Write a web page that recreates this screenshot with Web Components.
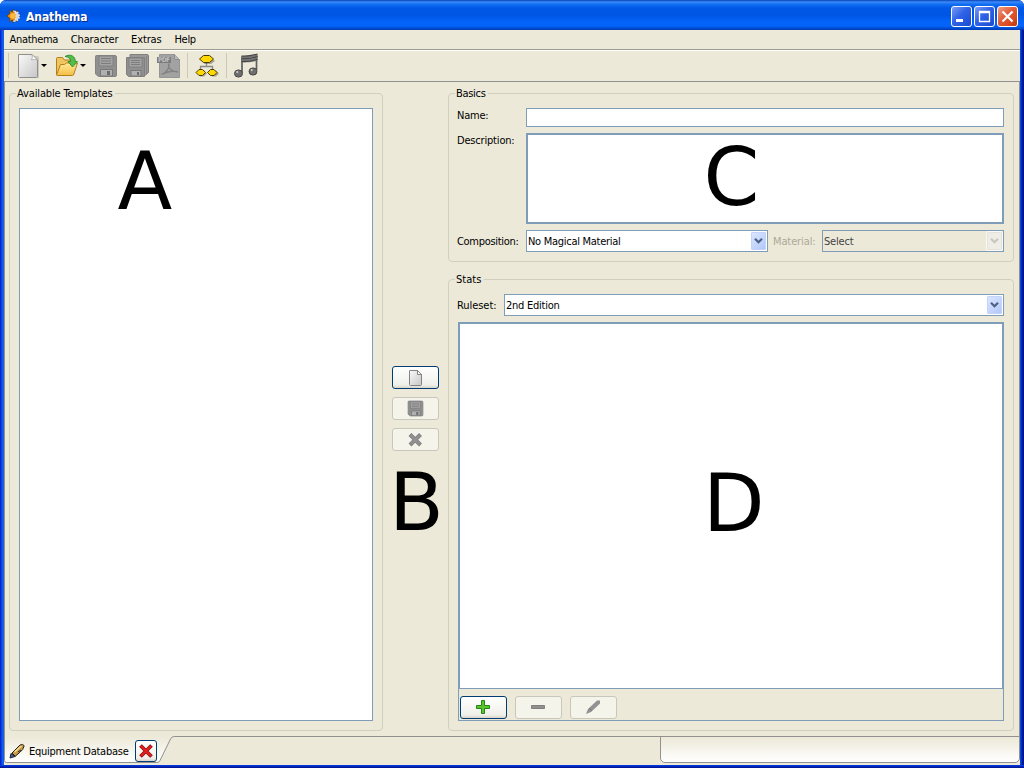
<!DOCTYPE html>
<html lang="en">
<head>
<meta charset="utf-8">
<title>Anathema</title>
<style>
html,body{margin:0;width:1024px;height:768px;overflow:hidden}
body{font:11px "DejaVu Sans Condensed","DejaVu Sans",sans-serif;font-stretch:condensed;color:#000}
</style>
</head>
<body>
<ana-window></ana-window>
<script>
const define = (name, html, init) => customElements.define(name, class extends HTMLElement {
  constructor() { super(); this.attachShadow({mode: 'open'}); }
  connectedCallback() {
    if (this.shadowRoot.firstChild) return;
    const t = document.createElement('template');
    t.innerHTML = html;
    this.shadowRoot.append(t.content.cloneNode(true));
    if (init) init.call(this, this.shadowRoot);
  }
});

/* label that spaces its letters to fill a given width */
customElements.define('ui-text', class extends HTMLElement {
  connectedCallback() {
    if (this.shadowRoot) return;
    const r = this.attachShadow({mode: 'open'});
    r.innerHTML = '<style>:host{display:flex;align-items:flex-start;height:14px;white-space:pre;line-height:14px;flex:none}span{display:block;flex:none;margin-top:1px}</style><span></span>';
    const s = r.querySelector('span');
    s.textContent = this.getAttribute('t');
    const w = +this.getAttribute('w');
    this.style.width = w + 'px';
    const real = s.getBoundingClientRect().width;
    if (real) s.style.letterSpacing = ((w - .5 - real) / s.textContent.length) + 'px';
  }
});

const icons = {
  sun: [16, `<path d="M7.500 1l1.200 3L11.500 2.500 11 5.500l3 2.500-3 2.500.5 3-2.800-1.500-1.200 3-1.200-3L3.500 13.500l.5-3L.8 8 4 5.500l-.5-3L6.300 4z" fill="#e08a10" stroke="#5c3408" stroke-width=".6"/><path d="M8.500 3.500a4.700 4.700 0 0 1 0 9.500c1.800-3 1.800-6.500 0-9.500z" fill="#d0d6e0" stroke="#e6e9ee" stroke-width="1.600" stroke-dasharray="1.500 1.200"/><circle cx="6.800" cy="8" r="2.700" fill="#ffb836"/>`],
  doc: [16, `<path d="M2.500 1q0-.5.5-.5h7.500l4 4V14.500q0 1-1 1h-10q-1 0-1-1z" fill="url(#g)" stroke="#838383"/><path d="M10.500 .5v4h4z" fill="#fff" stroke="#838383"/>`],
  page: [24, `<path d="M3.500 2h18l1.500 1v21H4z" fill="#000" opacity=".13"/><path d="M2.500 .5h13.500l5.500 5.500v16.500q0 1-1 1h-17q-1 0-1-1z" fill="url(#g)" stroke="#8e8e8e"/><path d="M16 .5q1 3-.5 5.500 3-1 6 0z" fill="#fff" stroke="#a5a5a5" stroke-width=".8"/>`],
  folder: [24, `<path d="M1.500 20.500V4.500q0-1 1-1h5l2 2.500h8q1 0 1 1v4" fill="#eec55f" stroke="#b3801d"/><path d="M1.500 21L5.500 10.500h4l2-1.500h11l-4 12q-.3.500-1 .5h-15q-1 0-1-.5z" fill="url(#y)" stroke="#b3801d"/><path d="M10 2.500c5-3 10.500-.5 10.300 5l2.200.2-5 5.300-4.500-5.500 2.700-.1c0-2.500-2-4.600-5.700-4.900z" fill="#52bd48" stroke="#2b8a28" stroke-width=".9"/>`],
  disk: [24, `<path d="M2.500 1.500h18.500q1.500 0 1.500 1.500v18q0 1.500-1.500 1.500H4.500L1.500 20V2.500q0-1 1-1z" fill="#8f8f8f" stroke="#838383"/><path d="M5 2h14v10H5z" fill="#a3a3a3" stroke="#808080"/><path d="M7 4.500h10M7 7h10M7 9.500h10" stroke="#7c7c7c"/><path d="M6.500 15.500h12V22h-12z" fill="#b0b0b0" stroke="#787878"/><path d="M13 17h3v4h-3z" fill="#6c6c6c"/>`],
  disks: [24, `<path d="M5 .5h17q1.500 0 1.500 1.500v16.500L20.500 21H5z" fill="#9a9a9a" stroke="#808080"/><path d="M21.500 2v18" stroke="#858585"/><path d="M1.500 3.500h18v19H3.500l-2-2z" fill="#8f8f8f" stroke="#808080"/><path d="M4 4h13v9H4z" fill="#a3a3a3" stroke="#808080"/><path d="M6 6.500h9M6 8.500h9M6 10.500h9" stroke="#7c7c7c"/><path d="M6 16.500h10V22H6z" fill="#b0b0b0" stroke="#787878"/><path d="M12 18h2v3h-2z" fill="#6c6c6c"/>`],
  pdf: [24, `<path d="M2.500 .5h15l5 5v18h-20z" fill="#a2a2a2" stroke="#959595"/><path d="M17.500 .5v5h5" fill="#b8b8b8" stroke="#909090"/><path d="M0 3h14v6H0z" fill="#7c7c7c"/><text x="1" y="8.300" font-size="6.500" font-weight="bold" fill="#c0c0c0" font-family="DejaVu Sans" textLength="12">PDF</text><path d="M4.500 20.500c6-2 8.500-8 7.500-10.500-1.500 1 0 7.500 9 8-4-1.500-11 0-16.500 2.500z" fill="none" stroke="#828282" stroke-width="1.300"/>`],
  tree: [24, `<path d="M11.500 9v3.500M5.500 17v-4.500h12V17" fill="none" stroke="#8b8b85" stroke-width="1.300"/><g fill="#000" opacity=".3"><path d="M9 4h7l4 3-4 3H9zM5 16.500h4l3 3-3 3H5zM17 16.500h4l3 3-3 3h-4z"/></g><g fill="#ffd800" stroke="#4a3c00"><path d="M8.500 1.500h6l4 3.500-4 3.500h-6L4.500 5z"/><path d="M4 15.500h3.500l3 3-3 3H4l-3-3zM15.500 15.500h3.500l3 3-3 3h-3.500l-3-3z"/></g>`],
  note: [26, `<path d="M9 20V3.500M23.500 17V2" stroke="#606060" stroke-width="1.700"/><path d="M8.500 3c6 .5 11-.5 16-2v6.500C19 9.500 14 9.500 8.500 9z" fill="#767676"/><path d="M8.500 3c6 .5 11-.5 16-2M8.500 5.700c6 .5 11-.5 16-2.200M8.500 8.500c6 .5 11-.5 16-2.200" fill="none" stroke="#444" stroke-width="1.100"/><ellipse cx="5.500" cy="20.500" rx="4" ry="3.600" fill="#6e6e6e" stroke="#484848"/><ellipse cx="20" cy="18.500" rx="4" ry="3.600" fill="#6e6e6e" stroke="#484848"/><path d="M3.500 19.500l1.500-1M18 17.500l1.500-1" stroke="#d5d5d5" stroke-width="1.700"/>`],
  x: [16, `<path d="M3 2.500l10.500 10.500M13.500 2.500L3 13" stroke="#7c7c7c" stroke-width="4"/><path d="M3.500 3l9.500 9.500M13 3L3.500 12.500" stroke="#919191" stroke-width="2.500"/>`],
  redx: [16, `<path d="M2.500 2.500l11 11M13.500 2.500l-11 11" stroke="#8f1010" stroke-width="3.800"/><path d="M3 3l10 10M13 3L3 13" stroke="#e02020" stroke-width="2.400"/>`],
  plus: [16, `<path d="M6.500 .5h3v5h5v3h-5v5h-3v-5h-5v-3h5z" fill="#5bc42d" stroke="#23871a"/>`],
  minus: [16, `<path d="M1.500 5.500h13v3h-13z" fill="#909090" stroke="#808080"/>`],
  pen: [16, `<path d="M1 14l2-5L12 .5h3v3L6 12z" fill="#929292"/><path d="M4 8l3 3" stroke="#777"/>`],
  quill: [16, `<path d="M1 15l1-4.500 4 3z" fill="#3c66a0" stroke="#223"/><path d="M3 10l8-8q3-1.500 4.200.8-1 4.200-4.200 6.400l-5 4.300z" fill="#c79b49" stroke="#2e2410"/><path d="M5.500 9l7-6" stroke="#f3dd9b" stroke-width="1.500"/><path d="M3 10l3 3M9 9l3-2" stroke="#222"/>`]
};
customElements.define('ui-icon', class extends HTMLElement {
  connectedCallback() {
    if (this.shadowRoot) return;
    const [n, body] = icons[this.getAttribute('n')], s = this.getAttribute('s') || n;
    this.attachShadow({mode: 'open'}).innerHTML = `<style>:host{display:block;flex:none}svg{display:block;overflow:visible}</style>
<svg width="${s}" height="${s}" viewBox="0 0 ${n} ${n}"><defs><linearGradient id="g" x2="1" y2="1"><stop stop-color="#fafafa"/><stop offset="1" stop-color="#c6c6c6"/></linearGradient><linearGradient id="y" x2="0" y2="1"><stop stop-color="#ffeb9c"/><stop offset="1" stop-color="#f5bd42"/></linearGradient></defs>${body}</svg>`;
  }
});

define('ui-button', `<style>
:host{display:flex;align-items:center;justify-content:center;box-sizing:border-box;width:47px;height:23px;padding:0 1px 1px 0;flex:none;border:1px solid #003c74;border-radius:3px;background:linear-gradient(#fff,#f0f0ea 85%,#d9d4c8)}
:host([off]){border-color:#c9c7ba;background:#f5f4ea}
::slotted(ui-icon){margin-top:1px}
</style><slot></slot>`);

define('ui-group', `<style>
:host{display:flex;flex-direction:column;box-sizing:border-box;position:relative;border:1px solid #d0d0bf;border-radius:4px}
ui-text{position:absolute;left:6px;top:-8px;padding:0 2px 0 1px;background:#ece9d8}
</style><ui-text></ui-text><slot></slot>`, function (r) {
  const old = r.querySelector('ui-text'), t = document.createElement('ui-text');
  t.setAttribute('t', this.getAttribute('label'));
  t.setAttribute('w', this.getAttribute('lw'));
  old.replaceWith(t);
});

define('ui-combo', `<style>
:host{display:flex;align-items:center;justify-content:space-between;box-sizing:border-box;height:22px;border:1px solid #7f9db9;background:#fff;padding:0 1px}
:host([off]){background:#ece9d8;color:#444}
i{display:flex;align-items:center;justify-content:center;box-sizing:border-box;width:15px;height:18px;border:1px solid #c3d3fd;border-radius:1px;background:linear-gradient(135deg,#dbe6ff,#b1c8fa);color:#4d6185}
:host([off]) i{background:#efeee6;border-color:#e5e3d9;box-shadow:0 0 0 1px #faf9f5;color:#c9c8bc}
</style><slot></slot><i><svg width="9" height="6"><path d="M1 .8l3.500 3.500L8 .8" fill="none" stroke="currentColor" stroke-width="2.200"/></svg></i>`);

define('win-button', `<style>
:host{display:flex;box-sizing:border-box;width:21px;height:21px;border:1px solid #fff;border-radius:3px;background:linear-gradient(135deg,#7a9cf5,#2f62e6 45%,#2456dc 75%,#1c48cf)}
:host([k=c]){background:linear-gradient(135deg,#f0a088,#e25a36 45%,#d94a22 75%,#b83410)}
svg{display:block}
</style><svg width="19" height="19" fill="none" stroke="#fff"><path/></svg>`, function (r) {
  const k = this.getAttribute('k'), p = r.querySelector('path');
  p.setAttribute('d', {m: 'M4 13.500h7', x: 'M4.500 4.500h10v10h-10zM4 5.500h11', c: 'M4.500 4.500l10 10M14.500 4.500l-10 10'}[k]);
  p.setAttribute('stroke-width', {m: 3, x: 1.3, c: 2.2}[k]);
});

define('ana-title', `<style>
:host{display:flex;align-items:center;box-sizing:border-box;height:30px;flex:none;padding:2px 6px 0 6px;background:linear-gradient(#0842b8 0,#3c8cf8 2px,#1470f4 4px,#0058e6 8px,#0056e4 15px,#0464fa 22px,#0464fa 26px,#0050d8 28px,#0038b0 30px);color:#fff}
b{flex:1;margin-left:4px;font:bold 12px "DejaVu Sans Condensed","DejaVu Sans",sans-serif;font-stretch:condensed;text-shadow:1px 1px #0a2a80}
div{display:flex;gap:2px}
</style><ui-icon n="sun"></ui-icon><b><ui-text t="Anathema" w="62"></ui-text></b><div><win-button k="m"></win-button><win-button k="x"></win-button><win-button k="c"></win-button></div>`);

define('ana-menu', `<style>
:host{display:flex;height:19px;flex:none;box-sizing:border-box;padding:2px 0 0 5.500px}
ui-text{margin-right:12.300px}
</style><ui-text t="Anathema" w="49"></ui-text><ui-text t="Character" w="48"></ui-text><ui-text t="Extras" w="31"></ui-text><ui-text t="Help" w="22"></ui-text>`);

define('ana-tools', `<style>
:host{display:flex;align-items:center;box-sizing:border-box;height:33px;flex:none;border-top:1px solid #9d9c92;border-bottom:1px solid #919191;box-shadow:inset 0 1px #fff;padding:0 0 0 4px}
i{width:1px;height:25px;background:#cbc9b5}
b{width:0;height:0;border:3px solid transparent;border-top-color:#000;border-bottom:0}
</style><i></i><ui-icon n="page" style="margin-left:7px"></ui-icon><b style="margin-left:1px"></b>
<ui-icon n="folder" style="margin-left:8px"></ui-icon><b style="margin-left:1px"></b>
<ui-icon n="disk" style="margin-left:8px"></ui-icon><ui-icon n="disks" style="margin-left:7px"></ui-icon><ui-icon n="pdf" style="margin-left:8px"></ui-icon>
<i style="margin-left:6px"></i><ui-icon n="tree" style="margin-left:7px"></ui-icon><i style="margin-left:7px"></i><ui-icon n="note" style="margin-left:6px"></ui-icon>`);

define('ana-templates', `<style>
:host{display:flex;width:374px;margin-top:11px}
ui-group{flex:1;padding:14px 9px 9px}
div{flex:1;border:1px solid #7f9db9;background:#fff}
</style><ui-group label="Available Templates" lw="96"><div></div></ui-group>`);

define('ana-actions', `<style>
:host{display:flex;flex-direction:column;align-items:center;gap:8px;width:65px;padding-top:284px}
</style><ui-button><ui-icon n="doc"></ui-icon></ui-button><ui-button off><ui-icon n="disk" s="17"></ui-icon></ui-button><ui-button off><ui-icon n="x"></ui-icon></ui-button>`);

define('ana-basics', `<style>
:host{display:block;height:169px;flex:none}
ui-group{height:169px;padding:14px 9px 0 8px}
.r{display:flex}
.r>ui-text{margin-right:auto}
.n{width:476px;height:17px;border:1px solid #7f9db9;background:#fff}
.d{width:474px;height:87px;border:2px solid #7f9db9;background:#fff}
</style><ui-group label="Basics" lw="30">
<div class="r"><ui-text t="Name:" w="32"></ui-text><div class="n"></div></div>
<div class="r" style="margin-top:6px"><ui-text t="Description:" w="58"></ui-text><div class="d"></div></div>
<div class="r" style="margin-top:6px"><ui-text t="Composition:" w="62" style="margin-top:4px"></ui-text><ui-combo style="width:242px"><ui-text t="No Magical Material" w="93"></ui-text></ui-combo><ui-text t="Material:" w="43" style="margin:4px 6px 0 5px;color:#aca899"></ui-text><ui-combo off style="width:182px"><ui-text t="Select" w="30"></ui-text></ui-combo></div>
</ui-group>`);

define('ana-stats', `<style>
:host{display:flex;flex:1;margin-top:17px}
ui-group{flex:1;padding:14px 9px 9px 8px}
.r{display:flex;align-items:center;justify-content:space-between}
.t{display:flex;flex-direction:column;flex:1;margin:6px 0 0 1px;border:1px solid #7f9db9}
.l{flex:1;background:#fff;border:1px solid #7f9db9}
.b{display:flex;gap:8px;padding:7px 0 1px 1px}
</style><ui-group label="Stats" lw="26">
<div class="r"><ui-text t="Ruleset:" w="40"></ui-text><ui-combo style="width:500px"><ui-text t="2nd Edition" w="54"></ui-text></ui-combo></div>
<div class="t"><div class="l"></div><div class="b"><ui-button><ui-icon n="plus"></ui-icon></ui-button><ui-button off><ui-icon n="minus"></ui-icon></ui-button><ui-button off><ui-icon n="pen"></ui-icon></ui-button></div></div>
</ui-group>`);

define('ana-tabs', `<style>
:host{display:flex;height:29px;flex:none;justify-content:space-between;position:relative}
.t{display:flex;align-items:center;width:172px;position:relative}
svg.s{position:absolute;left:0;top:0}
.t>*{position:relative}
.t>svg.s{position:absolute}
.l{position:absolute;top:0;left:168px;right:0;height:1px;background:#919191}
.p{box-sizing:border-box;width:360px;height:27px;border:1px solid #919191;border-radius:0 0 5px 5px;background:linear-gradient(#ece9d8,#fff)}
ui-button{width:22px;height:22px;padding:0 0 1px}
</style><div class="l"></div><div class="t"><svg class="s" width="174" height="29"><defs><linearGradient id="t" x2="0" y2="1"><stop stop-color="#ece9d8"/><stop offset="1" stop-color="#fff"/></linearGradient></defs><path d="M.5 0V24.500q0 2 2 2H153q2 0 3-2L166.500 3q1-2.500 4-2.500V0z" fill="url(#t)"/><path d="M.5 0V24.500q0 2 2 2H153q2 0 3-2L166.500 3q1-2.500 4-2.500" fill="none" stroke="#919191"/></svg><ui-icon n="quill" style="margin-left:5px"></ui-icon><ui-text t="Equipment Database" w="100" style="margin-left:4px"></ui-text><ui-button style="margin-left:6px"><ui-icon n="redx"></ui-icon></ui-button></div><div class="p"></div>`);

define('ana-window', `<style>
:host{display:flex;flex-direction:column;box-sizing:border-box;width:1024px;height:768px;position:relative;overflow:hidden;border-radius:6px 6px 0 0;background:linear-gradient(90deg,#0019cf 0,#0831d9 1px,#166aee 3px,#0855dd 4px,#0855dd 1020px,#0441d8 1021px,#001ea0 1022px,#00138c)}
.c{display:flex;flex-direction:column;flex:1;margin:0 4px;background:#ece9d8}
.m{display:flex;flex:1;box-sizing:border-box;border:solid #919191;border-width:0 1px;padding:0 4px 5px}
.r{display:flex;flex-direction:column;width:566px;padding-top:11px}
.f{height:3px;flex:none;background:linear-gradient(#0441e8,#0020b0 60%,#00138c)}
span{position:absolute;font:80px/94px "DejaVu Sans",sans-serif}
</style><ana-title></ana-title><div class="c"><ana-menu></ana-menu><ana-tools></ana-tools><div class="m"><ana-templates></ana-templates><ana-actions></ana-actions><div class="r"><ana-basics></ana-basics><ana-stats></ana-stats></div></div><ana-tabs></ana-tabs></div><div class="f"></div>
<span style="left:117.500px;top:135px">A</span><span style="left:389px;top:456px">B</span><span style="left:703.500px;top:131px">C</span><span style="left:703px;top:457px">D</span>`);
</script>
</body>
</html>
